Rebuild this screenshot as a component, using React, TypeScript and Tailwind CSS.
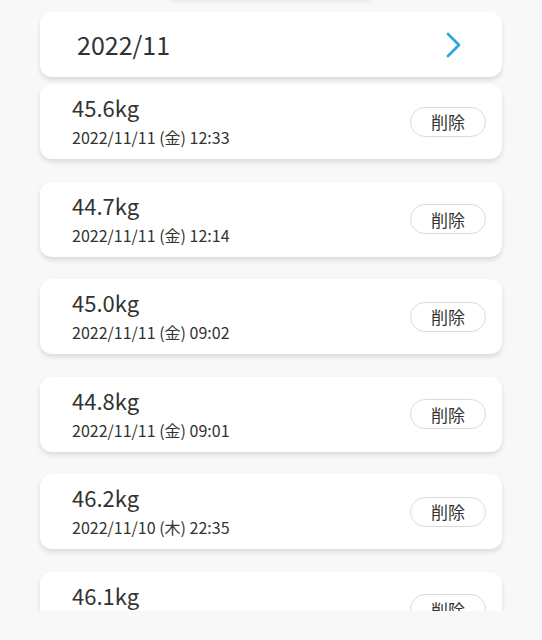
import React from "react";

const items = [
  { w: "45.6kg", d: "2022/11/11 (金) 12:33" },
  { w: "44.7kg", d: "2022/11/11 (金) 12:14" },
  { w: "45.0kg", d: "2022/11/11 (金) 09:02" },
  { w: "44.8kg", d: "2022/11/11 (金) 09:01" },
  { w: "46.2kg", d: "2022/11/10 (木) 22:35" },
  { w: "46.1kg", d: "2022/11/10 (木) 22:30" },
];

export default function App() {
  return (
    <div
      className="h-[640px] w-[542px] overflow-hidden bg-[#f8f8f8] text-[#333]"
      style={{ fontFamily: '"Noto Sans CJK JP", "Noto Sans", sans-serif' }}
    >
      <div className="relative h-0">
        <div className="absolute left-[165px] top-[-20px] h-[20px] w-[210px] rounded-full bg-[#f9f9f9] shadow-[0_2px_4px_rgba(0,0,0,0.06)]" />
      </div>
      <div className="px-[40px] pt-[12px]">
        <div className="flex h-[65px] items-center justify-between rounded-[12px] bg-white pl-[37px] pr-[40px] shadow-[0_3px_4px_rgba(0,0,0,0.12)]">
          <span className="text-[25px] leading-none">2022/11</span>
          <svg width="16" height="26" viewBox="0 0 16 26" fill="none">
            <path d="M2 2 L13 13 L2 24" stroke="#28a8e0" strokeWidth="2.8" strokeLinecap="round" strokeLinejoin="round" />
          </svg>
        </div>
      </div>
      <div className="mt-[7px] h-[527px] overflow-hidden">
        <div className="flex flex-col gap-[22.5px] px-[40px] pb-4">
          {items.map((it, i) => (
            <div
              key={i}
              className="flex h-[75px] shrink-0 items-center justify-between rounded-[12px] bg-white pl-[32px] pr-[16px] shadow-[0_3px_5px_rgba(0,0,0,0.12)]"
            >
              <div className="flex flex-col self-start pt-[8px]">
                <span className="text-[22px] leading-[30px]">{it.w}</span>
                <span className="text-[16px] leading-[31px]">{it.d}</span>
              </div>
              <button className="flex h-[30px] w-[76px] items-center justify-center rounded-full border border-[#ead6d0] bg-white text-[17px] leading-none text-[#333]">
                削除
              </button>
            </div>
          ))}
        </div>
      </div>
    </div>
  );
}
